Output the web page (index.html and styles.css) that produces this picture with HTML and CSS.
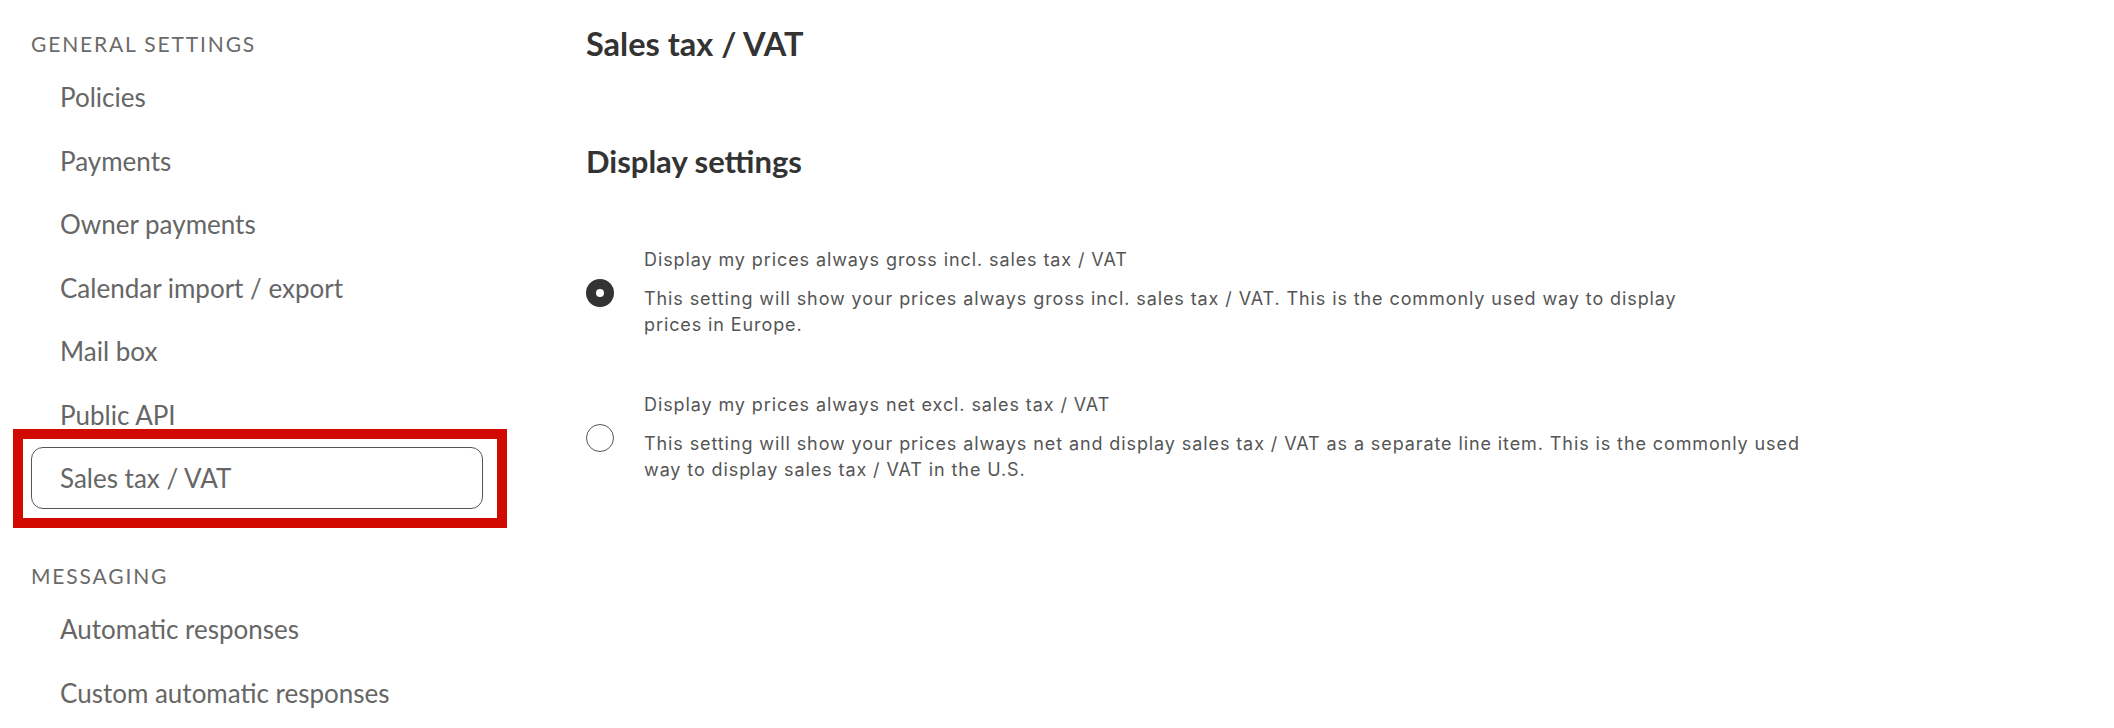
FILE: index.html
```html
<!DOCTYPE html>
<html lang="en">
<head>
<meta charset="utf-8">
<title>Sales tax / VAT</title>
<link rel="stylesheet" href="styles.css">
</head>
<body>
<div class="page">
  <nav class="sidebar">
    <section class="group">
      <div class="group-title">GENERAL SETTINGS</div>
      <ul class="menu">
        <li class="item">Policies</li>
        <li class="item">Payments</li>
        <li class="item">Owner payments</li>
        <li class="item">Calendar import / export</li>
        <li class="item">Mail box</li>
        <li class="item">Public API</li>
        <li class="item active">Sales tax / VAT</li>
      </ul>
    </section>
    <section class="group">
      <div class="group-title">MESSAGING</div>
      <ul class="menu">
        <li class="item">Automatic responses</li>
        <li class="item">Custom automatic responses</li>
      </ul>
    </section>
  </nav>
  <main class="content">
    <h1 class="title">Sales tax / VAT</h1>
    <h2 class="subtitle">Display settings</h2>
    <div class="options">
      <label class="option">
        <span class="radio checked"></span>
        <span class="option-text">
          <span class="option-label">Display my prices always gross incl. sales tax / VAT</span>
          <span class="option-desc">This setting will show your prices always gross incl. sales tax / VAT. This is the commonly used way to display<br>prices in Europe.</span>
        </span>
      </label>
      <label class="option">
        <span class="radio"></span>
        <span class="option-text">
          <span class="option-label">Display my prices always net excl. sales tax / VAT</span>
          <span class="option-desc">This setting will show your prices always net and display sales tax / VAT as a separate line item. This is the commonly used<br>way to display sales tax / VAT in the U.S.</span>
        </span>
      </label>
    </div>
  </main>
</div>
</body>
</html>
```

FILE: styles.css
```css
html, body { margin: 0; padding: 0; background: #fff; }
body { font-family: "Lato", sans-serif; color: #333; }
.page { display: flex; align-items: flex-start; }
.sidebar { width: 476px; padding-left: 31px; flex: none; }
.group { padding-top: 28px; }
.group + .group { margin-top: 23px; }
.group-title { font-size: 21px; line-height: 32px; letter-spacing: 1.85px; color: #6a6a6a; margin-bottom: 6px; }
.menu { list-style: none; margin: 0; padding: 0; display: flex; flex-direction: column; gap: 1.5px; }
.item { height: 62px; box-sizing: border-box; display: flex; align-items: center; padding-left: 28px; font-size: 26px; color: #666; border: 1px solid transparent; border-radius: 12px; width: 452px; position: relative; }
.item.active { border-color: #555; }
.item.active::after { content: ""; position: absolute; left: -19px; right: -25px; top: -19px; bottom: -20px; border: 10px solid #d10a00; }
.content { padding-left: 79px; padding-top: 24px; flex: 1; }
.title { margin: 0; font-size: 32.5px; line-height: 40px; font-weight: 700; color: #333; }
.subtitle { margin: 80px 0 0; font-size: 31px; line-height: 34px; font-weight: 700; color: #333; }
.options { margin-top: 69px; display: flex; flex-direction: column; gap: 54px; font-family: "Inter", sans-serif; }
.option { display: flex; align-items: center; gap: 30px; }
.radio { width: 28px; height: 28px; box-sizing: border-box; border-radius: 50%; border: 1.5px solid #555; flex: none; }
.radio.checked { border: 10px solid #333; }
.option-text { display: flex; flex-direction: column; }
.option-label { font-size: 18px; line-height: 26px; letter-spacing: 0.9px; color: #555; margin-bottom: 13px; }
.option-desc { font-size: 18px; line-height: 26px; letter-spacing: 0.9px; color: #555; }
```
